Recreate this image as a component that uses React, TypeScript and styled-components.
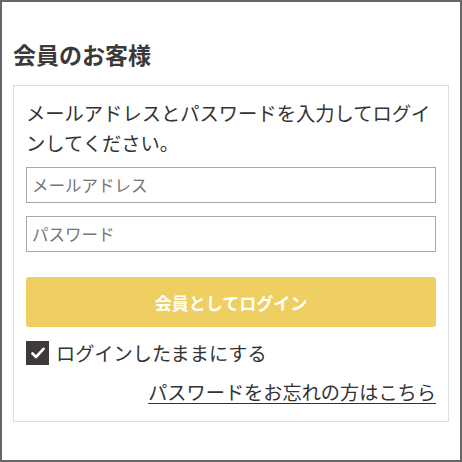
import React from "react";
import styled, { createGlobalStyle } from "styled-components";

const Global = createGlobalStyle`
  html, body { margin: 0; padding: 0; background: #fff; }
  body { font-family: "Noto Sans CJK JP", "Noto Sans", sans-serif; color: #333; }
  * { box-sizing: border-box; }
`;

const Frame = styled.div`
  width: 462px;
  height: 462px;
  border: 2px solid #666;
  padding: 38px 11px 0;
  background: #fff;
`;

const Title = styled.h2`
  margin: 0 0 17px;
  font-size: 23px;
  line-height: 28px;
  font-weight: 700;
  color: #3a3a3a;
`;

const Card = styled.div`
  border: 1px solid #dedede;
  padding: 12px 12px 17px;
  display: flex;
  flex-direction: column;
`;

const Lead = styled.p`
  margin: 0 0 9px;
  font-size: 19.3px;
  line-height: 30px;
  color: #333;
`;

const Input = styled.input<{ $gap?: number }>`
  display: block;
  width: 100%;
  height: 36px;
  margin: 0 0 ${(p) => p.$gap ?? 0}px;
  padding: 0 5px;
  border: 1px solid #a9a9a9;
  border-radius: 0;
  font-family: inherit;
  font-size: 16.5px;
  color: #333;
  outline: none;
  &::placeholder { color: #767676; }
`;

const Button = styled.button`
  display: block;
  width: 100%;
  height: 50px;
  margin: 25px 0 14px;
  border: none;
  border-radius: 3px;
  background: #efcf62;
  color: #fff;
  font-family: inherit;
  font-size: 17px;
  font-weight: 700;
  cursor: pointer;
`;

const CheckRow = styled.label`
  display: flex;
  align-items: center;
  gap: 7px;
  height: 24px;
  font-size: 19.2px;
  line-height: 24px;
  color: #333;
`;

const Box = styled.span`
  width: 23px;
  height: 24px;
  background: #3d3a39;
  display: flex;
  align-items: center;
  justify-content: center;
`;

const LinkRow = styled.div`
  margin-top: 15px;
  display: flex;
  justify-content: flex-end;
`;

const Link = styled.a`
  font-size: 19.2px;
  line-height: 24px;
  color: #333;
  text-decoration: underline;
  text-underline-offset: 3px;
`;

export default function App() {
  return (
    <>
      <Global />
      <Frame>
        <Title>会員のお客様</Title>
        <Card>
          <Lead>メールアドレスとパスワードを入力してログインしてください。</Lead>
          <Input placeholder="メールアドレス" $gap={13} />
          <Input placeholder="パスワード" type="password" />
          <Button>会員としてログイン</Button>
          <CheckRow>
            <Box>
              <svg width="14" height="12" viewBox="0 0 14 12">
                <path d="M1.5 6.5 L5 10 L12.5 1.8" fill="none" stroke="#fff" strokeWidth="2.6" strokeLinecap="round" strokeLinejoin="round" />
              </svg>
            </Box>
            ログインしたままにする
          </CheckRow>
          <LinkRow>
            <Link href="#">パスワードをお忘れの方はこちら</Link>
          </LinkRow>
        </Card>
      </Frame>
    </>
  );
}
